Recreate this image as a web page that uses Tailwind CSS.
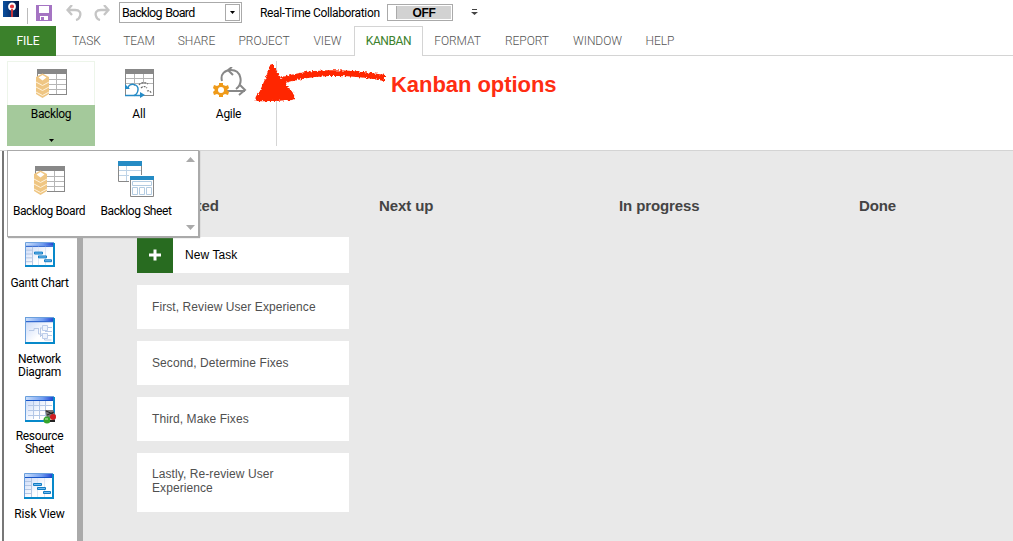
<!DOCTYPE html>
<html lang="en"><head><meta charset="utf-8"><title>Kanban options</title>
<script src="https://cdn.jsdelivr.net/npm/@tailwindcss/browser@4"></script></head>
<body class="relative flex h-[541px] w-[1013px] flex-col overflow-hidden bg-white font-['Roboto',sans-serif] text-[12px] leading-[13px] text-black">
<svg class="absolute h-0 w-0"><defs>
<linearGradient id="bar" x1="0" x2="1"><stop offset="0" stop-color="#c9defb"/><stop offset=".6" stop-color="#6f9cf0"/><stop offset="1" stop-color="#1d3fd0"/></linearGradient>
<linearGradient id="pane" x1="0" x2="1" y1="0" y2="1"><stop offset="0" stop-color="#c3d5f7"/><stop offset=".6" stop-color="#fff"/></linearGradient>
<linearGradient id="app" x1="0" x2="1"><stop offset="0" stop-color="#0a50a0"/><stop offset="1" stop-color="#06123f"/></linearGradient>
<filter id="rough" x="-10%" y="-20%" width="120%" height="140%"><feTurbulence type="fractalNoise" baseFrequency=".45" numOctaves="2" seed="4" result="n"/><feDisplacementMap in="SourceGraphic" in2="n" scale="4" xChannelSelector="R" yChannelSelector="G"/></filter>
<symbol id="backlog" viewBox="0 0 31 30"><path d="M1 1h29v25H1z" fill="#fff"/><path d="M1 0h30v5H1z" fill="#888"/><path d="M13 10.500h17M13 15.500h17M13 20.500h17M20.500 5v20" stroke="#b5b5b5" fill="none"/><path d="M13 25.500h17M30.500 5v21" stroke="#888"/><path d="M1.500 5v3" stroke="#888"/><path d="M0 8l6.500-3.500L13 8v17l-6.500 4L0 25z" fill="#efc683"/><path d="M2.500 8.500l4-2.500 4 2.500-4 3z" fill="#fff"/><path d="M0 13l6.500 3.500L13 13M0 18l6.500 3.500L13 18M0 23l6.500 3.500L13 23" stroke="#fff3dc" stroke-width="1" fill="none"/></symbol>
<symbol id="win" viewBox="0 0 30 26" preserveAspectRatio="none"><path d="M1 1h28v24H1z" fill="url(#pane)"/><path d="M1 1h28v3H1z" fill="url(#bar)"/><path d="M.5 25V.5H29" stroke="#6a9fdc" fill="none"/><path d="M1 4.500h28" stroke="#1654c8"/><path d="M0 25h29V1" stroke="#0789ca" stroke-width="2" fill="none"/></symbol>
<symbol id="gantt" viewBox="0 0 30 26" preserveAspectRatio="none"><use href="#win" width="30" height="26"/><path d="M1 8.500h6M1 12.500h6M1 16.500h6M1 20.500h6M7.500 5v19" stroke="#b5c6e2"/><path d="M13.500 5v19M20.500 5v19" stroke="#dde6f5"/><path d="M9.500 10.500h8v2h-8zM13.500 14.500h8v2h-8zM19.500 18.500h7v2h-7z" fill="#70baf0" stroke="#127cc3"/></symbol>
</defs></svg>

<header class="flex h-[26px] shrink-0 items-start">
<svg class="ml-[3px] mt-px h-4 w-4 shrink-0" viewBox="0 0 16 16"><path fill="url(#app)" d="M0 0h16v16H0z"/><circle cx="9" cy="5.500" r="3" fill="#e73b3f" stroke="#fff" stroke-width="1.800"/><path d="M9 8v8" stroke="#dc3434" stroke-width="1.800"/></svg>
<div class="ml-2 mt-2 h-4 w-px shrink-0 bg-[#bbb]"></div>
<svg class="ml-2 mt-[5px] h-4 w-4 shrink-0" viewBox="0 0 16 16"><path d="M0 0h16v16H0z" fill="#a574c3"/><path d="M3 1h10v7H3zM4 11h8v4H4z" fill="#fff"/><path d="M5 12h3v3H5z" fill="#a574c3"/></svg>
<svg class="ml-[14px] mt-[5px] h-4 w-4 shrink-0" viewBox="0 0 16 16" fill="none" stroke="#c5c5c5" stroke-width="2.300"><path d="M6 0L1.500 5 6 10M2 5h7c5 0 6 3 5 6-.5 2-2 3.500-4 4"/></svg>
<svg class="ml-[12px] mt-[5px] h-4 w-4 shrink-0" viewBox="0 0 16 16" fill="none" stroke="#c5c5c5" stroke-width="2.300"><path d="M10 0l4.500 5-4.500 5M14 5H7C2 5 1 8 2 11c.5 2 2 3.500 4 4"/></svg>
<div class="ml-[9px] mt-[2px] flex h-[21px] w-[123px] shrink-0 items-center justify-between border border-[#aaa] pl-[2px] pr-px"><span class="whitespace-nowrap tracking-[-0.7px] [word-spacing:1px] text-[12.5px]">Backlog Board</span><span class="flex h-[17px] w-[15px] items-center justify-center border border-[#aaa]"><svg class="h-[3px] w-[5px]" viewBox="0 0 5 3"><path d="M0 0h5L2.500 3z"/></svg></span></div>
<span class="ml-[18px] mt-[7px] w-[120px] shrink-0 whitespace-nowrap tracking-[-0.35px]">Real-Time Collaboration</span>
<div class="ml-[7px] mt-[4px] flex h-[17px] w-[66px] shrink-0 border border-[#aaa] p-px"><div class="w-[8px] border-r border-[#aaa]"></div><div class="flex flex-1 items-center justify-center bg-[#d2d2d2] pt-px font-['Liberation_Sans',sans-serif] text-[12px] font-bold tracking-[-0.3px]">OFF</div></div>
<svg class="ml-[18px] mt-[9px] h-[7px] w-[7px] shrink-0" viewBox="0 0 7 7" fill="#444"><path d="M1 0h5v1H1zM0 3h7L3.500 6z"/></svg>
</header>

<nav class="flex h-[30px] shrink-0 font-light tracking-[-0.05px] text-[#555]">
<div class="flex w-[56px] items-center justify-center bg-[#3b812b] font-normal text-white"><span>FILE</span></div>
<div class="flex w-[298px] border-b border-[#d4d4d4] pl-[5px] pt-px">
<span class="flex w-[51px] items-center justify-center">TASK</span><span class="flex w-[54px] items-center justify-center">TEAM</span><span class="flex w-[61px] items-center justify-center">SHARE</span><span class="flex w-[74px] items-center justify-center">PROJECT</span><span class="flex w-[53px] items-center justify-center">VIEW</span></div>
<div class="flex w-[69px] items-center justify-center border-x border-t border-[#d4d4d4] font-normal text-[#3b812b]"><span class="tracking-[-0.4px]">KANBAN</span></div>
<div class="flex flex-1 border-b border-[#d4d4d4] pt-px"><span class="flex w-[69px] items-center justify-center">FORMAT</span><span class="flex w-[70px] items-center justify-center">REPORT</span><span class="flex w-[71px] items-center justify-center">WINDOW</span><span class="flex w-[54px] items-center justify-center">HELP</span></div>
</nav>

<section class="flex h-[95px] shrink-0 border-b border-[#d4d4d4] pl-[7px] pt-[5px]">
<div class="flex h-[85px] w-[88px] flex-col border border-b-0 border-[#edf5ea]"><div class="flex h-[43px] justify-center pt-[7px]"><svg class="ml-px h-[30px] w-[31px]"><use href="#backlog"/></svg></div><div class="-mx-px flex h-[41px] flex-col items-center bg-[#a4c99b] pt-[3px]"><span class="tracking-[-0.35px]">Backlog</span><svg class="mt-[18px] h-[3px] w-[5px] shrink-0" viewBox="0 0 5 3"><path d="M0 0h5L2.500 3z"/></svg></div></div>
<div class="flex w-[88px] flex-col items-center pt-[8px]"><svg class="ml-[2px] h-[30px] w-[30px]" viewBox="0 0 30 30" fill="none"><path d="M9.500 5v12M18.500 5v10M0 9.500h28M0 14.500h28" stroke="#b5b5b5"/><path d="M.5 2v25M28.500 2v25M0 26.500h28" stroke="#888"/><path d="M0 0h29v5H0z" fill="#888"/><path d="M3 19c1-6 11-4 10 2-.5 3-2 5-4 5.500" stroke="#258bc7" stroke-width="1.500"/><path d="M0 15v5h5zM15 23v6l5-3z" fill="#258bc7"/><path d="M0 26.500h16" stroke="#258bc7" stroke-width="1.500"/><path d="M14 16c2-3 7-3 9-1M16 19c2-2 4-2 6 0M22 22c3-1 3 1 5 2" stroke="#666" stroke-width="1.200" stroke-dasharray="2 1"/></svg><span class="mt-[9px] tracking-[-0.1px]">All</span></div>
<div class="flex w-[93px] flex-col items-center pr-[2px] pt-[6px]"><svg class="ml-[3px] h-[32px] w-[34px]" viewBox="0 0 34 32" fill="none"><path d="M9 14C7 7 12 3 18 3c10 0 13 13 5 19M12 24h20M19 0l-4 3 5 5M27 18l5 5-6 5" stroke="#888" stroke-width="2"/><path d="M6 16h4v2l3 1 2-1 1 3-2 2 2 2-1 3-3-1-2 1v2H6v-2l-2-1-3 1-1-3 2-2-2-2 1-3 3 1 2-1z" fill="#ef9a19"/><circle cx="8" cy="23" r="3" fill="#fff"/></svg><span class="mt-[9px] tracking-[-0.3px]">Agile</span></div>
<div class="h-[85px] w-px bg-[#d5d5d5]"></div>
</section>

<main class="flex flex-1 bg-[#e9e9e9]">
<aside class="flex w-[83px] shrink-0 border-r-[6px] border-[#aaa] bg-white pl-[2px]"><div class="w-[2px] bg-[#777]"></div>
<div class="flex w-[71px] flex-col items-center text-center tracking-[-0.3px]">
<div class="mt-[91px] flex h-[75px] flex-col items-center"><svg class="h-[25px] w-[30px]"><use href="#gantt" width="30" height="25"/></svg><span class="mt-[10px] whitespace-nowrap">Gantt Chart</span></div>
<div class="flex h-[78px] flex-col items-center"><svg class="h-[27px] w-[30px]" viewBox="0 0 30 27"><use href="#win" width="30" height="27"/><path d="M4 13.500h5v-2h4M15 11h4M19 10.500h8M15.500 11v9M15 18.500h12M20 14.500h7M13.500 11v6h6v6h7" stroke="#b8c9e6" fill="none"/><path d="M17.500 8.500h5v5h-5zM17.500 16.500h5v5h-5z" fill="#eef3fc" stroke="#bdcdea"/></svg><span class="mt-[9px]">Network<br>Diagram</span></div>
<div class="mt-[1px] flex h-[77px] flex-col items-center"><svg class="ml-[2px] h-[28px] w-[32px]" viewBox="0 0 32 28"><use href="#win" width="30" height="26"/><path d="M3 9.500h24M3 14.500h24M3 19.500h20M8.500 5v18M14.500 5v18M20.500 5v18" stroke="#b4c7e6"/><path d="M20 14h8l3 6-9 3z" fill="#777"/><path d="M21 15l7 3M22 19l7-3" stroke="#222"/><circle cx="22" cy="24" r="3.500" fill="#35a52c"/><path d="M20 23h3" stroke="#c7f4b6"/><circle cx="28" cy="21" r="3" fill="#ce1c20"/><path d="M25 25h5" stroke="#222" stroke-width="2"/></svg><span class="mt-[6px]">Resource<br>Sheet</span></div>
<div class="flex flex-col items-center"><svg class="h-[26px] w-[30px]"><use href="#gantt" width="30" height="26"/></svg><span class="mt-[9px] whitespace-nowrap tracking-[-0.1px]">Risk View</span></div>
</div></aside>
<div class="ml-[54px] flex pt-[47px] font-['Liberation_Sans',sans-serif]">
<section class="w-[240px]"><h2 class="ml-[2px] h-[39px] text-[15px] font-bold leading-4 tracking-[-0.1px] text-[#444]">Not Started</h2>
<div class="flex w-[212px] flex-col gap-3 tracking-[0.08px] text-[#505050]">
<div class="flex h-[36px] items-center bg-white text-black"><div class="flex h-9 w-9 items-center justify-center bg-[#286b20]"><svg class="h-[12px] w-[12px]" viewBox="0 0 12 12"><path d="M6 .5v11M0 6h12" stroke="#fff" stroke-width="3"/></svg></div><span class="ml-[12px]">New Task</span></div>
<div class="flex h-11 items-center bg-white pl-[15px]">First, Review User Experience</div><div class="flex h-11 items-center bg-white pl-[15px]">Second, Determine Fixes</div><div class="flex h-11 items-center bg-white pl-[15px]">Third, Make Fixes</div><div class="flex h-[59px] items-center bg-white pb-1 pl-[15px] leading-[14px]">Lastly, Re-review User<br>Experience</div>
</div></section>
<h2 class="ml-[2px] w-[240px] text-[15px] font-bold leading-4 tracking-[-0.1px] text-[#444]">Next up</h2><h2 class="w-[240px] text-[15px] font-bold leading-4 tracking-[-0.1px] text-[#444]">In progress</h2><h2 class="text-[15px] font-bold leading-4 tracking-[-0.1px] text-[#444]">Done</h2>
</div></main>

<div class="absolute left-[7px] top-[150px] flex h-[87px] w-[192px] border border-[#aaa] bg-white pt-[10px] shadow-[1px_1px_1px_#aaa]">
<div class="flex w-[82px] flex-col items-center pt-[5px]"><svg class="ml-px h-[30px] w-[31px] shrink-0"><use href="#backlog"/></svg><span class="mt-[9px] whitespace-nowrap tracking-[-0.4px]">Backlog Board</span></div>
<div class="flex w-[92px] flex-col items-center"><svg class="h-9 w-9 shrink-0" viewBox="0 0 36 36" fill="#fff"><path d="M.5.5h23v20H.5z" stroke="#888"/><path d="M0 0h24v5H0z" fill="#258bc4"/><path d="M8.500 5v15M1 9.500h7M1 14.500h7M9 9.500h14M9 14.500h8" stroke="#bdd3e7"/><path d="M11 14h25v22H11z"/><path d="M12.500 15.500h23v20h-23z" stroke="#888"/><path d="M12 15h24v4H12z" fill="#258bc4"/><path d="M14.500 20.500h19v4h-19zM14.500 26.500h5v7h-5zM21.500 26.500h5v7h-5zM28.500 26.500h5v7h-5z" stroke="#b3cce2"/></svg><span class="mt-[8px] whitespace-nowrap tracking-[-0.4px]">Backlog Sheet</span></div>
<div class="-mt-[5px] flex flex-1 flex-col items-center justify-between pb-[6px] pt-[1px]"><svg class="h-[5px] w-[9px]" viewBox="0 0 9 5" fill="#aaa"><path d="M4.500 0L9 5H0z"/></svg><svg class="h-[5px] w-[9px]" viewBox="0 0 9 5" fill="#aaa"><path d="M0 0h9L4.500 5z"/></svg></div>
</div>
<svg class="absolute left-[250px] top-[60px] h-[46px] w-[142px]" viewBox="0 0 142 46"><g filter="url(#rough)" fill="#ff2602"><path d="M20 5c2-2 4 0 5 3l6 10c4-3 7 0 5 5 0 4 4 4 4 7 5 2 5 8 3 10-12 0-24 2-36 1-3-2-1-6 2-8L16 17z"/><path d="M33 17C63 8 98 9 135 15v6C98 14 65 14 35 23z"/></g></svg>
<span class="absolute left-[391px] top-[73px] whitespace-nowrap font-['Liberation_Sans',sans-serif] text-[22px] font-bold leading-6 tracking-[-0.05px] text-[#ff2d12]">Kanban options</span>
</body></html>
